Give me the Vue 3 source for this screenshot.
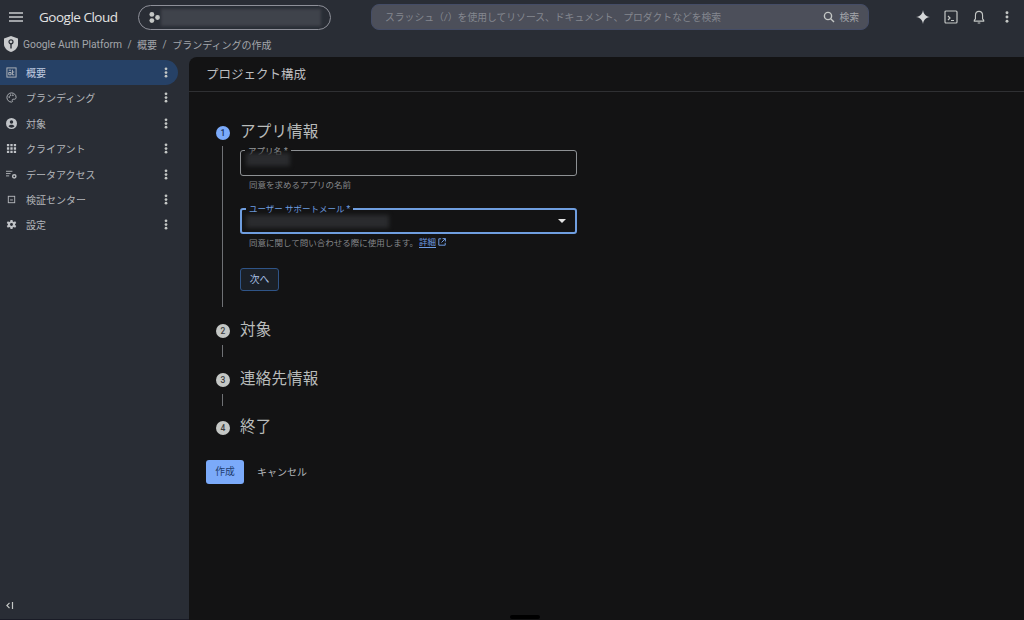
<script setup>
const navItems = [
  { label: '概要', icon: 'overview', active: true },
  { label: 'ブランディング', icon: 'palette' },
  { label: '対象', icon: 'person' },
  { label: 'クライアント', icon: 'grid' },
  { label: 'データアクセス', icon: 'data' },
  { label: '検証センター', icon: 'verify' },
  { label: '設定', icon: 'gear' }
]
const crumbs = ['Google Auth Platform', '概要', 'ブランディングの作成']
</script>

<template>
  <div class="page">
    <header class="topbar">
      <svg class="menu" viewBox="0 0 14 10"><path d="M0 1h14M0 5h14M0 9h14" /></svg>
      <span class="logo">Google Cloud</span>
      <div class="project">
        <svg class="dots" viewBox="0 0 10 10"><circle cx="2.600" cy="2.200" r="2.200" /><circle cx="2.600" cy="7.800" r="2.200" /><circle cx="7.800" cy="5" r="2.200" /></svg>
        <span class="project-blur"></span>
      </div>
      <div class="search">
        <span class="search-text">スラッシュ（/）を使用してリソース、ドキュメント、プロダクトなどを検索</span>
        <svg class="search-icon" viewBox="0 0 12 12"><circle cx="5" cy="5" r="3.600" /><path d="M7.700 7.700 11 11" /></svg>
        <span class="search-label">検索</span>
      </div>
      <div class="actions">
        <svg class="act spark" viewBox="0 0 16 16"><path d="M8 0c.7 4.600 2.900 7.100 8 8-5.100.9-7.300 3.400-8 8-.7-4.600-2.900-7.100-8-8 5.100-.9 7.300-3.400 8-8z" /></svg>
        <svg class="act term" viewBox="0 0 14 14"><rect x="1" y="1" width="12" height="12" rx="1" /><path d="m4 6 2 2-2 2M7 10.500h3" /></svg>
        <svg class="act bell" viewBox="0 0 14 16"><path d="M7 1.500c-2.600 0-3.800 2-3.800 4.300v3.700L2 11v.8h10V11l-1.200-1.500V5.800c0-2.300-1.200-4.300-3.800-4.300zM5.600 13.800h2.800" /></svg>
        <svg class="act kebab-top" viewBox="0 0 4 14"><circle cx="2" cy="2" r="1.700" /><circle cx="2" cy="7" r="1.700" /><circle cx="2" cy="12" r="1.700" /></svg>
      </div>
    </header>

    <nav class="crumbs">
      <svg class="shield" viewBox="0 0 14 16">
        <path class="shield-body" d="M7 0 14 2.500V8c0 3.800-3 6.700-7 8-4-1.300-7-4.200-7-8V2.500z" />
        <circle class="shield-key" cx="7" cy="5.800" r="2" />
        <path class="shield-stem" d="M7 7.500v5" />
      </svg>
      <template v-for="(crumb, i) in crumbs" :key="crumb">
        <span v-if="i" class="sep">/</span>
        <span class="crumb" :class="{ 'crumb-root': !i }">{{ crumb }}</span>
      </template>
    </nav>

    <div class="body">
      <aside class="sidebar">
        <ul class="nav">
          <li v-for="item in navItems" :key="item.label" class="nav-item" :class="{ active: item.active }">
            <svg class="nav-icon" viewBox="0 0 12 12">
              <g v-if="item.icon === 'overview'" class="outline">
                <rect x="1" y="1" width="10" height="10" /><path d="M3 3.500h2.500M3 6h2.500v2.500H3zM7 3v5.500h2M7 5.500h2" />
              </g>
              <g v-else-if="item.icon === 'palette'" class="outline">
                <path d="M6 1a5 5 0 0 0 0 10c1.200 0 1.300-.9.9-1.500-.5-.8 0-1.600.9-1.600h1.400C10.300 7.900 11 7 11 5.800 11 3.100 8.800 1 6 1z" />
                <circle cx="3.500" cy="5.500" r=".5" /><circle cx="5" cy="3.500" r=".5" /><circle cx="7.500" cy="3.500" r=".5" />
              </g>
              <path v-else-if="item.icon === 'person'" class="fill" fill-rule="evenodd" d="M6 0a6 6 0 1 1 0 12A6 6 0 0 1 6 0zm0 2.400a1.900 1.900 0 1 0 0 3.800 1.900 1.900 0 0 0 0-3.800zM2.700 9c.8 1 2 1.500 3.300 1.500S8.500 10 9.300 9C8.600 8 7.400 7.400 6 7.400S3.400 8 2.700 9z" />
              <path v-else-if="item.icon === 'grid'" class="fill" d="M1 1h2.500v2.500H1zM4.750 1h2.500v2.500h-2.500zM8.500 1H11v2.500H8.500zM1 4.750h2.500v2.500H1zM4.750 4.750h2.500v2.500h-2.500zM8.500 4.750H11v2.500H8.500zM1 8.500h2.500V11H1zM4.750 8.500h2.500V11h-2.500zM8.500 8.500H11V11H8.500z" />
              <g v-else-if="item.icon === 'data'" class="outline">
                <path d="M0 2.500h7M0 5h5M0 7.500h3.500" /><circle cx="9" cy="8" r="1.800" stroke-width="1.600" />
              </g>
              <g v-else-if="item.icon === 'verify'" class="outline">
                <rect x="2.500" y="2.500" width="7" height="7" /><path d="M4.500 6.500h3" />
              </g>
              <path v-else class="fill" fill-rule="evenodd" d="M4.900 0h2.200l.3 1.700 1 .5L10 1.500l1.200 1.900-1.300 1.100v1l1.300 1.100L10 8.500l-1.600-.7-1 .5-.3 1.700H4.900l-.3-1.700-1-.5-1.600.7L.8 6.600l1.300-1.100v-1L.8 3.400 2 1.500l1.600.7 1-.5zM6 3.400a1.600 1.600 0 1 0 0 3.200 1.600 1.600 0 0 0 0-3.200z" transform="translate(0 1)" />
            </svg>
            <span class="nav-label">{{ item.label }}</span>
            <svg class="kebab" viewBox="0 0 4 12"><circle cx="2" cy="2" r="1.500" /><circle cx="2" cy="6" r="1.500" /><circle cx="2" cy="10" r="1.500" /></svg>
          </li>
        </ul>
        <svg class="collapse" viewBox="0 0 8 7"><path d="M3.500.8.900 3.500l2.600 2.700M6.500 0v7" /></svg>
      </aside>

      <main class="panel">
        <h1 class="panel-title">プロジェクト構成</h1>
        <div class="panel-body">
          <section class="step step-open">
            <div class="step-head">
              <span class="badge badge-on">1</span>
              <h2 class="step-title">アプリ情報</h2>
            </div>
            <div class="step-content">
              <div class="field field-name">
                <span class="field-label">アプリ名 *</span>
                <span class="blur blur-name"></span>
              </div>
              <p class="hint hint-first">同意を求めるアプリの名前</p>
              <div class="field field-focus">
                <span class="field-label">ユーザー サポートメール *</span>
                <span class="blur blur-mail"></span>
                <span class="caret"></span>
              </div>
              <p class="hint">
                同意に関して問い合わせる際に使用します。
                <span class="link">詳細</span>
                <svg class="ext" viewBox="0 0 8 8"><path d="M3.200.8H.8v6.400h6.400V4.800M4.500.6h2.900v2.900M7.300.7 3.500 4.500" /></svg>
              </p>
              <button class="next" type="button">次へ</button>
            </div>
          </section>

          <section class="step step-short">
            <div class="step-head">
              <span class="badge">2</span>
              <h2 class="step-title">対象</h2>
            </div>
          </section>
          <section class="step step-short">
            <div class="step-head">
              <span class="badge">3</span>
              <h2 class="step-title">連絡先情報</h2>
            </div>
          </section>
          <section class="step step-last">
            <div class="step-head">
              <span class="badge">4</span>
              <h2 class="step-title">終了</h2>
            </div>
          </section>

          <div class="form-actions">
            <button class="create" type="button">作成</button>
            <button class="cancel" type="button">キャンセル</button>
          </div>
        </div>
        <span class="handle"></span>
      </main>
    </div>
  </div>
</template>

<style>
html, body { margin: 0; background: #282c34; }
</style>

<style scoped>
.page {
  width: 1024px;
  height: 620px;
  display: flex;
  flex-direction: column;
  overflow: hidden;
  background: #292d35;
  color: #c4c7c5;
  font-family: "Roboto", "Noto Sans CJK JP", sans-serif;
}
h1, h2, p, ul { margin: 0; padding: 0; font-weight: 400; }
button { font-family: inherit; cursor: pointer; }

.topbar {
  height: 34px;
  flex: none;
  display: flex;
  align-items: center;
  padding-left: 9px;
  box-sizing: border-box;
}
.menu { width: 14px; height: 10px; fill: none; stroke: #c8cacd; stroke-width: 1.400; }
.logo { margin-left: 16px; width: 99px; padding-bottom: 1px; font: 500 13.500px "Open Sans", sans-serif; letter-spacing: -0.500px; color: #e3e3e3; white-space: nowrap; }
.project {
  width: 193px;
  height: 25px;
  box-sizing: border-box;
  border: 1px solid #8e9099;
  border-radius: 13px;
  display: flex;
  align-items: center;
  padding-left: 10px;
}
.dots { width: 11px; height: 11px; flex: none; fill: #c4c7c5; }
.project-blur { width: 160px; height: 17px; margin-left: 1px; background: #3f434b; filter: blur(1.500px); }
.search {
  width: 498px;
  height: 26px;
  margin-left: 40px;
  box-sizing: border-box;
  border: 1px solid #444c66;
  border-radius: 8px;
  background: #4c4f5a;
  display: flex;
  align-items: center;
  padding: 0 9px 1px 13px;
  font-size: 9.800px;
  color: #84878f;
}
.search-text { flex: 1; white-space: nowrap; }
.search-icon { width: 12px; height: 12px; fill: none; stroke: #c4c7c5; stroke-width: 1.400; }
.search-label { margin-left: 4px; color: #a5a7ac; }
.actions { display: flex; align-items: center; margin-left: 47px; }
.act { fill: none; stroke: #c4c7c5; stroke-width: 1.200; }
.spark { width: 14px; height: 14px; fill: #d4d6d8; stroke: none; }
.term { width: 14px; height: 14px; margin-left: 14px; }
.bell { width: 14px; height: 15px; margin-left: 14px; }
.kebab-top { width: 4px; height: 12px; margin-left: 19px; fill: #c4c7c5; stroke: none; }

.crumbs {
  height: 23px;
  flex: none;
  box-sizing: border-box;
  padding: 0 0 3px 4px;
  display: flex;
  align-items: center;
  font-size: 10px;
  color: #a3a6ab;
}
.crumb-root { font-size: 10.300px; }
.shield { width: 14px; height: 16px; margin-right: 5px; }
.shield-body { fill: #c9cbcd; }
.shield-key { fill: none; stroke: #292d35; stroke-width: 1.200; }
.shield-stem { stroke: #292d35; stroke-width: 1.400; }
.sep { margin: 0 5.500px; }

.body { flex: 1; display: flex; min-height: 0; }

.sidebar {
  width: 189px;
  flex: none;
  position: relative;
  box-sizing: border-box;
  padding-top: 2.800px;
  border-bottom: 1px solid #191b26;
}
.nav { list-style: none; }
.nav-item {
  width: 178px;
  height: 25.400px;
  box-sizing: border-box;
  display: flex;
  align-items: center;
  padding: 0 8px 0 6px;
  border-radius: 0 13px 13px 0;
  font-size: 10px;
  color: #b4b7bb;
}
.nav-item.active { background: #264166; color: #c0cce0; }
.nav-icon { width: 11px; height: 11px; flex: none; }
.outline { fill: none; stroke: #b6b9bd; stroke-width: 1; }
.fill { fill: #c0c3c7; }
.nav-label { flex: 1; margin-left: 9px; }
.kebab { width: 4px; height: 11px; fill: #c4c7c5; flex: none; margin-right: 2px; }
.collapse {
  position: absolute;
  left: 6px;
  bottom: 10px;
  width: 8px;
  height: 7px;
  fill: none;
  stroke: #c4c7c5;
  stroke-width: 1.200;
}

.panel {
  flex: 1;
  position: relative;
  background: #131314;
  border-radius: 8px 0 0 0;
  min-width: 0;
}
.panel-title {
  height: 35px;
  box-sizing: border-box;
  padding: 9px 0 0 17px;
  font-size: 12.500px;
  line-height: 17px;
  color: #bcbec0;
  border-bottom: 1px solid #2f3033;
}
.panel-body { padding: 29px 0 0 17px; }

.step { position: relative; }
.step-open { height: 198px; }
.step-short { height: 48.500px; }
.step-last { height: 44px; }
.step-open::before,
.step-short::before {
  content: "";
  position: absolute;
  left: 16px;
  width: 1px;
  background: #6f7175;
}
.step-open::before { top: 25px; height: 161px; }
.step-short::before { top: 26px; height: 12px; }

.step-head { display: flex; align-items: center; height: 22px; }
.badge {
  width: 14px;
  height: 14px;
  margin-left: 10px;
  border-radius: 50%;
  background: #c4c7c5;
  color: #3c3d40;
  font-size: 8.500px;
  font-weight: 500;
  line-height: 14px;
  text-align: center;
  margin-top: 2px;
}
.badge-on { background: #7baafa; color: #17305a; }
.step-title { margin-left: 10px; font-size: 15.500px; line-height: 22px; color: #b9bcbb; letter-spacing: 0.200px; }

.step-content { padding-left: 34px; padding-top: 7px; }
.field {
  position: relative;
  width: 337px;
  height: 26px;
  box-sizing: border-box;
  border: 1px solid #8e9194;
  border-radius: 3px;
  display: flex;
  align-items: center;
  padding: 0 10px 0 5px;
}
.field-focus { height: 26px; margin-top: 17px; border: 2px solid #6f9ee0; padding-left: 4px; padding-right: 9px; }
.field-label {
  position: absolute;
  left: 4px;
  top: -5px;
  padding: 0 3px;
  background: #131314;
  font-size: 8.500px;
  line-height: 10px;
  color: #96999c;
}
.field-focus .field-label { left: 4px; top: -6px; color: #6f9ee0; }
.blur { display: block; height: 13px; background: #2a2b2e; filter: blur(2px); }
.blur-name { width: 44px; margin-top: -8px; }
.blur-mail { width: 143px; flex: none; }
.caret {
  margin-left: auto;
  width: 0;
  height: 0;
  border: 4px solid transparent;
  border-top-color: #e3e3e3;
  border-bottom: 0;
}
.hint {
  display: flex;
  align-items: center;
  height: 16px;
  padding: 0 0 0 9px;
  font-size: 8.500px;
  color: #85878a;
  white-space: nowrap;
}
.hint-first { height: 15px; }
.link { color: #6f9be0; border-bottom: 1px solid #6f9be0; line-height: 10px; margin-left: 1px; }
.ext { width: 8px; height: 8px; margin-left: 2px; fill: none; stroke: #6f9be0; stroke-width: 1; }
.next {
  display: block;
  width: 39px;
  height: 23px;
  margin-top: 18px;
  padding: 0 0 2px;
  box-sizing: border-box;
  border: 1px solid #2f5487;
  border-radius: 3px;
  background: #1b2027;
  color: #a9c1e6;
  font-size: 9.800px;
}

.form-actions { display: flex; align-items: center; }
.create {
  width: 38px;
  height: 24px;
  padding: 0 0 2px;
  border: 0;
  border-radius: 3px;
  background: #7baafa;
  color: #1f3d6e;
  font-size: 9.800px;
}
.cancel {
  margin-left: 13px;
  padding: 0 0 2px;
  border: 0;
  background: none;
  color: #b4b6b9;
  font-size: 10px;
}
.handle {
  position: absolute;
  left: 321px;
  bottom: 1px;
  width: 30px;
  height: 4px;
  border-radius: 2px;
  background: #000;
}
</style>
